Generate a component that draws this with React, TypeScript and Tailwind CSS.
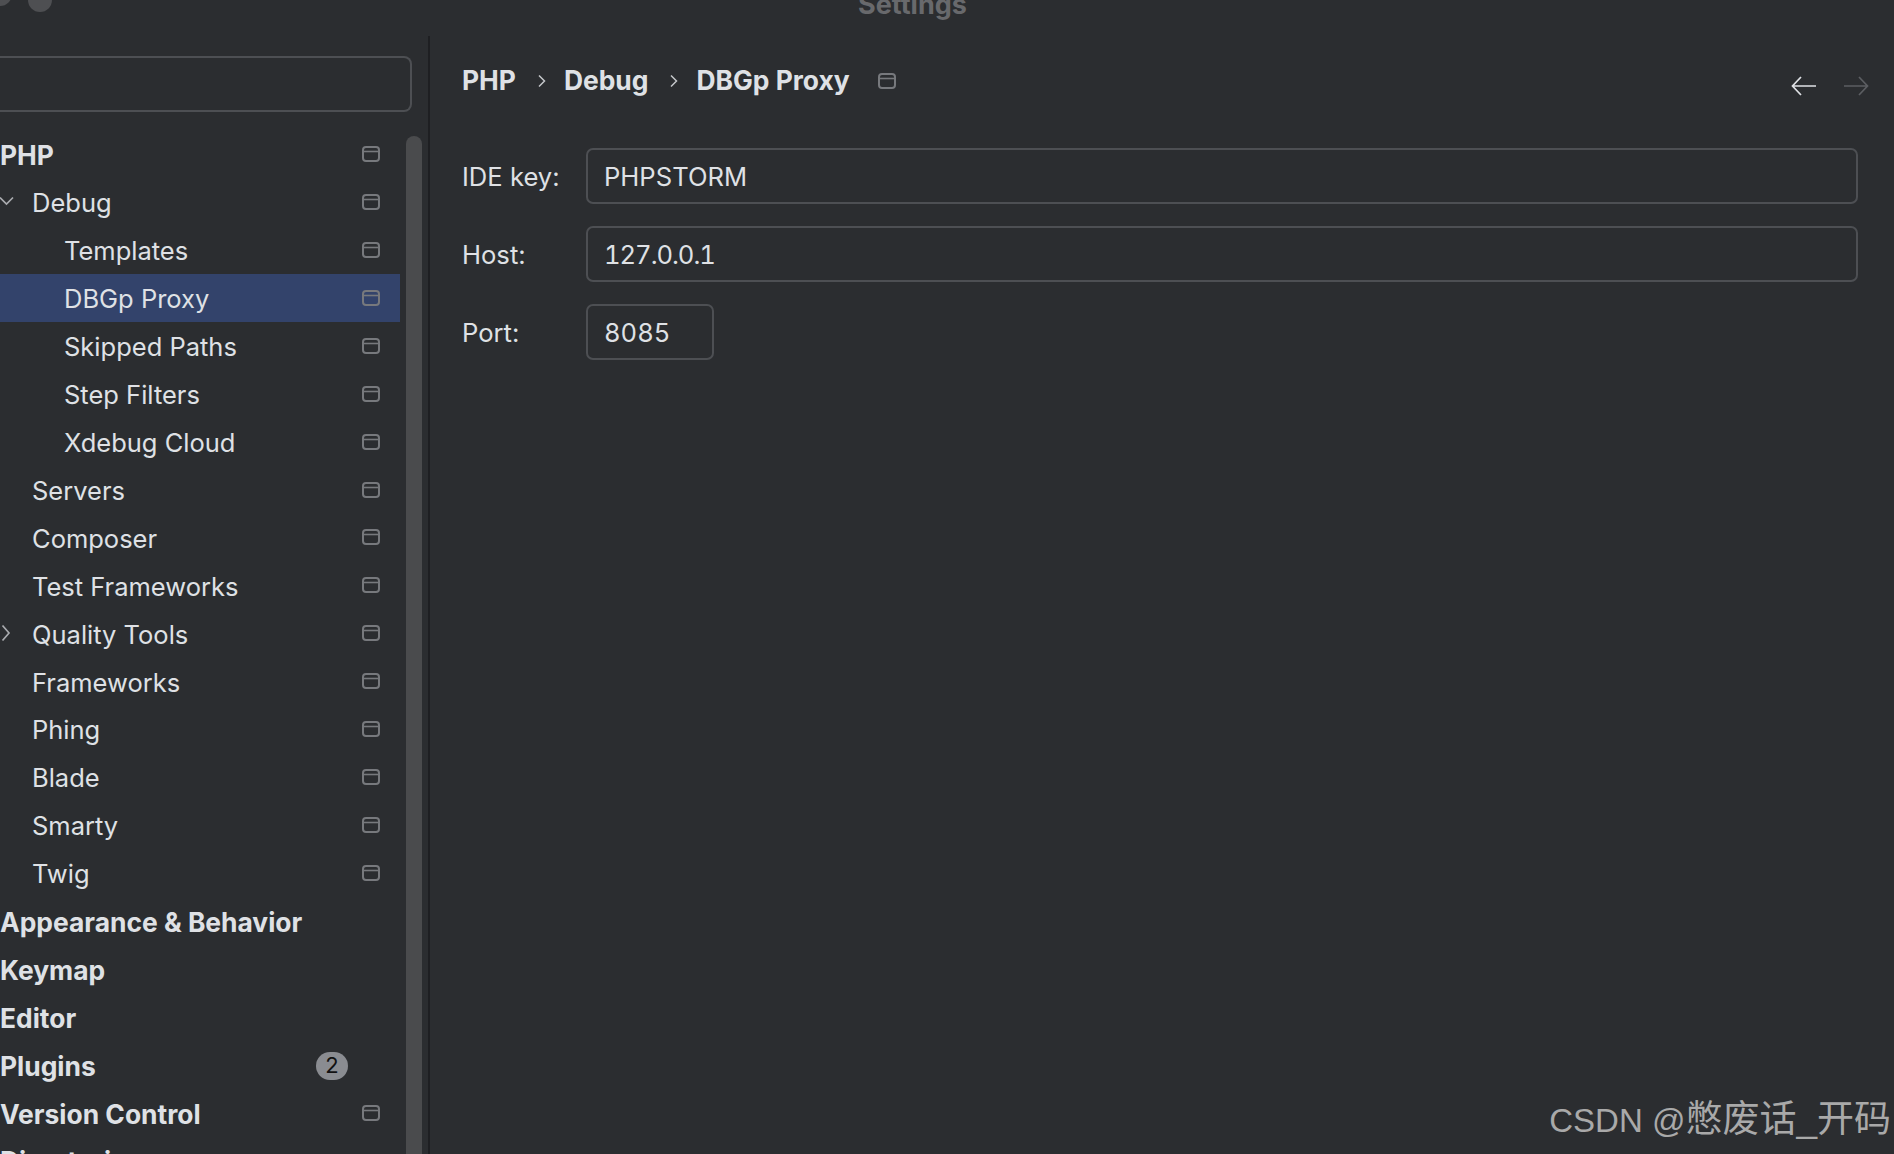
import React from "react";

function Gear({ className = "" }: { className?: string }) {
  return (
    <svg width="20" height="18" viewBox="0 0 20 18" fill="none" className={className}>
      <rect x="2" y="2" width="16" height="14" rx="3" stroke="#77797d" strokeWidth="2" />
      <path d="M2 6.5H18" stroke="#77797d" strokeWidth="1.6" />
    </svg>
  );
}

const rows: { t: string; indent: number; bold?: boolean; chev?: "down" | "right"; sel?: boolean; icon?: boolean; badge?: string }[] = [
  { t: "PHP", indent: 0, bold: true, icon: true },
  { t: "Debug", indent: 1, chev: "down", icon: true },
  { t: "Templates", indent: 2, icon: true },
  { t: "DBGp Proxy", indent: 2, sel: true, icon: true },
  { t: "Skipped Paths", indent: 2, icon: true },
  { t: "Step Filters", indent: 2, icon: true },
  { t: "Xdebug Cloud", indent: 2, icon: true },
  { t: "Servers", indent: 1, icon: true },
  { t: "Composer", indent: 1, icon: true },
  { t: "Test Frameworks", indent: 1, icon: true },
  { t: "Quality Tools", indent: 1, chev: "right", icon: true },
  { t: "Frameworks", indent: 1, icon: true },
  { t: "Phing", indent: 1, icon: true },
  { t: "Blade", indent: 1, icon: true },
  { t: "Smarty", indent: 1, icon: true },
  { t: "Twig", indent: 1, icon: true },
  { t: "Appearance & Behavior", indent: 0, bold: true },
  { t: "Keymap", indent: 0, bold: true },
  { t: "Editor", indent: 0, bold: true },
  { t: "Plugins", indent: 0, bold: true, badge: "2" },
  { t: "Version Control", indent: 0, bold: true, icon: true },
  { t: "Directories", indent: 0, bold: true },
];

function Row({ r }: { r: (typeof rows)[number] }) {
  const pad = r.indent === 0 ? "pl-0" : r.indent === 1 ? "pl-[32px]" : "pl-[64px]";
  return (
    <div className={`relative flex h-[47.95px] items-center pr-[19px] ${pad} ${r.sel ? "bg-[#33436b]" : ""}`}>
      {r.chev === "down" && (
        <svg width="14" height="10" viewBox="0 0 14 10" fill="none" className="absolute left-0 top-[18px]">
          <path d="M0 1.500L6.500 8L13 1.500" stroke="#a9abaf" strokeWidth="1.7" />
        </svg>
      )}
      {r.chev === "right" && (
        <svg width="10" height="18" viewBox="0 0 10 18" fill="none" className="absolute left-[1px] top-[15px]">
          <path d="M1.500 1.500L8 9L1.500 16.500" stroke="#a9abaf" strokeWidth="1.7" />
        </svg>
      )}
      <span
        className={`flex-1 translate-y-[0.5px] leading-none text-[#dfe1e5] ${r.bold ? "text-[26.4px] font-bold" : "text-[25.5px]"}`}
      >
        {r.t}
      </span>
      {r.icon && <Gear />}
      {r.badge && (
        <span className="mr-[33px] flex h-[28px] w-[32px] translate-y-[1px] items-center justify-center rounded-full bg-[#8a8c91] text-[22px] text-[#111]">
          {r.badge}
        </span>
      )}
    </div>
  );
}

function Field({ label, value, narrow, tight }: { label: string; value: string; narrow?: boolean; tight?: boolean }) {
  return (
    <div className="flex h-[56px] items-center">
      <span className="w-[124px] translate-y-[1px] text-[25.6px] text-[#dfe1e5]">{label}</span>
      <div
        className={`flex h-[56px] items-center rounded-[7px] border-2 border-[#4d4f53] pl-[16px] pt-[2px] text-[25.6px] tabular-nums text-[#dfe1e5] ${narrow ? "w-[128px]" : "flex-1"} ${tight ? "tracking-[-1.050px]" : ""}`}
      >
        {value}
      </div>
    </div>
  );
}

function Crumb() {
  return (
    <svg width="10" height="14" viewBox="0 0 10 14" fill="none">
      <path d="M2 1.500L7.500 7L2 12.500" stroke="#c4c6ca" strokeWidth="1.5" />
    </svg>
  );
}

export default function App() {
  return (
    <div
      className="flex h-[1154px] w-[1894px] flex-col overflow-hidden bg-[#2b2d30]"
      style={{ fontFamily: "Inter, 'Noto Sans CJK SC', sans-serif" }}
    >
      <div className="relative h-[36px] shrink-0">
        <div className="absolute left-[-12px] top-[-18px] flex gap-[16px]">
          <div className="h-[24px] w-[24px] rounded-full bg-[#4e4f52]" />
          <div className="mt-[6px] h-[24px] w-[24px] rounded-full bg-[#4e4f52]" />
        </div>
        <div className="absolute left-[858px] top-[-10px] text-[27px] font-bold leading-[30px] text-[#68696c]">Settings</div>
      </div>
      <div className="flex min-h-0 flex-1">
        <aside className="flex w-[430px] shrink-0 flex-col border-r-2 border-[#1e1f22]">
          <div className="mt-[20px] h-[56px] w-[412px] shrink-0 rounded-r-[8px] border-2 border-l-0 border-[#4d4f53]" />
          <div className="mt-[18px] flex min-h-0 flex-1 gap-[6px]">
            <div className="w-[400px] shrink-0 overflow-hidden">
              {rows.map((r) => (
                <Row key={r.t} r={r} />
              ))}
            </div>
            <div className="mt-[6px] w-[16px] rounded-t-full bg-[#4a4b4d]" />
          </div>
        </aside>
        <main className="relative flex-1 pl-[32px] pr-[36px]">
          <div className="flex h-[112px] items-center pb-[22px]">
            <span className="text-[26.4px] font-bold text-[#dfe1e5]">PHP</span>
            <span className="ml-[21px] mr-[17px]"><Crumb /></span>
            <span className="text-[26.4px] font-bold text-[#dfe1e5]">Debug</span>
            <span className="ml-[21px] mr-[17px]"><Crumb /></span>
            <span className="text-[26.4px] font-bold text-[#dfe1e5]">DBGp Proxy</span>
            <Gear className="ml-[27px]" />
            <svg width="28" height="22" viewBox="0 0 28 22" fill="none" className="ml-auto mr-[13px] mt-[10px]">
              <path d="M26 11H3M11 2L2.500 11L11 20" stroke="#dfe1e5" strokeWidth="1.7" />
            </svg>
            <svg width="28" height="22" viewBox="0 0 28 22" fill="none" className="ml-[11px] mr-[-12px] mt-[10px]">
              <path d="M2 11H25M17 2L25.500 11L17 20" stroke="#5c5e62" strokeWidth="1.7" />
            </svg>
          </div>
          <div className="flex flex-col gap-[22px]">
            <Field label="IDE key:" value="PHPSTORM" />
            <Field label="Host:" value="127.0.0.1" tight />
            <Field label="Port:" value="8085" narrow />
          </div>
          <div
            className="absolute bottom-[16px] right-[3px] flex items-baseline text-[33px] leading-none text-[#a9a9a9]"
            style={{ fontFamily: "'Liberation Sans', 'Noto Sans CJK SC', sans-serif" }}
          >
            <span className="whitespace-pre">CSDN @</span>
            <span className="text-[37px]">憋废话_开码</span>
          </div>
        </main>
      </div>
    </div>
  );
}
